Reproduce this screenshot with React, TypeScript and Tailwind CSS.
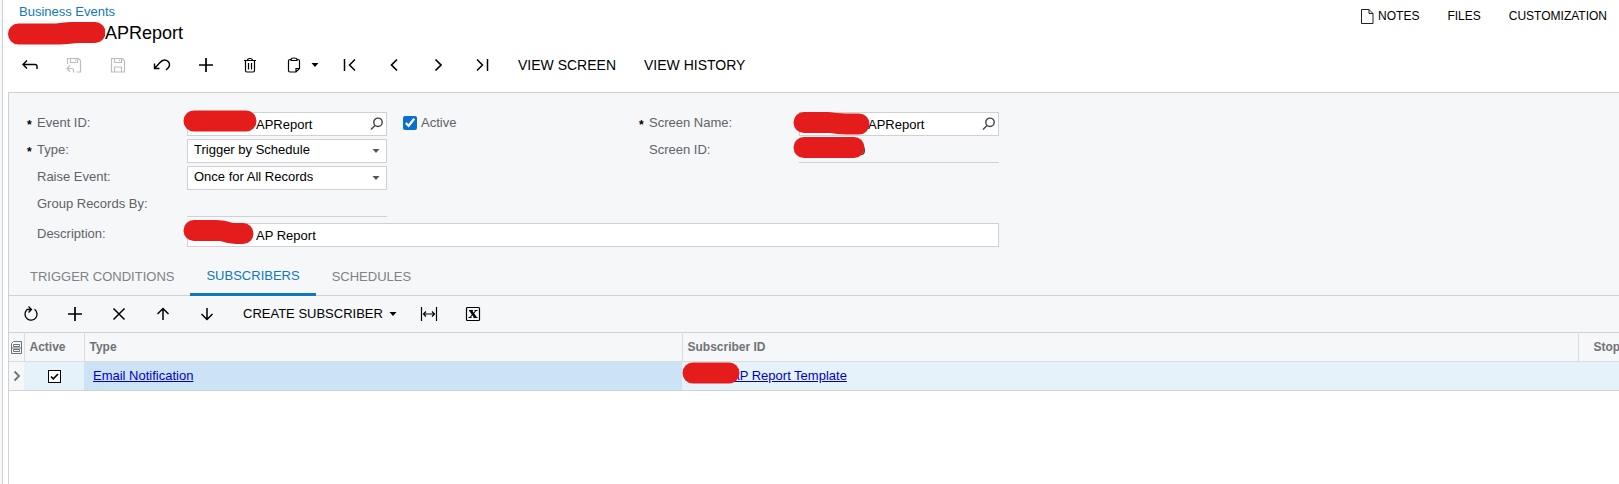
import type { ReactNode } from 'react';

const RED = '#e51c1c';

function Icon({ size = 18, width = 1.5, color = 'currentColor', children }: { size?: number; width?: number; color?: string; children: ReactNode }) {
  return (
    <svg width={size} height={size} viewBox="0 0 18 18" fill="none" stroke={color} strokeWidth={width} aria-hidden="true" className="shrink-0">
      {children}
    </svg>
  );
}

function Caret({ className = '' }: { className?: string }) {
  return (
    <svg width="8" height="4" viewBox="0 0 8 4" aria-hidden="true" className={`shrink-0 ${className}`}>
      <path d="M0.5 0h7L4 4z" fill="currentColor" />
    </svg>
  );
}

function Marker({ d, width, height, className = '' }: { d: string; width: number; height: number; className?: string }) {
  return (
    <svg width={width} height={height} viewBox={`0 0 ${width} ${height}`} aria-hidden="true" className={`pointer-events-none shrink-0 ${className}`}>
      <path d={d} fill={RED} />
    </svg>
  );
}

function ToolButton({ label, children, disabled, wide }: { label: string; children: ReactNode; disabled?: boolean; wide?: boolean }) {
  return (
    <button
      type="button"
      aria-label={label}
      disabled={disabled}
      className={`flex h-9 items-center justify-center ${wide ? 'w-14 gap-2 pl-1' : 'w-11'} ${disabled ? 'text-[#bdbdbd]' : 'text-black'}`}
    >
      {children}
    </button>
  );
}

const PlusIcon = () => (
  <Icon width={1.7}>
    <path d="M9 2v14M2 9h14" />
  </Icon>
);

function Label({ htmlFor, required, children }: { htmlFor: string; required?: boolean; children: ReactNode }) {
  return (
    <div className="flex h-6 w-[178px] shrink-0 pl-[18px]">
      <span className="w-2.5 pt-0.5 text-xs leading-[22px] font-bold text-black">{required ? '*' : ''}</span>
      <label htmlFor={htmlFor} className="text-[13px] leading-[22px] text-[#5e6368]">
        {children}
      </label>
    </div>
  );
}

function Lookup({ id, value, marker }: { id: string; value: string; marker: ReactNode }) {
  return (
    <div className="relative h-6 w-[200px]">
      <input id={id} defaultValue={value} className="block h-6 w-full border border-[#cfd1d3] bg-white pt-px pr-6 pl-[68px] text-[13px] text-black outline-none" />
      {marker}
      <button type="button" aria-label="Search" className="absolute top-1 right-0.5 flex size-4 items-center justify-center text-[#444]">
        <svg width="14" height="14" viewBox="0 0 14 14" fill="none" stroke="currentColor" strokeWidth="1.400" aria-hidden="true">
          <circle cx="8" cy="5.300" r="4.200" />
          <path d="M5 8.400L1 12.600" />
        </svg>
      </button>
    </div>
  );
}

function Select({ id, value }: { id: string; value: string }) {
  return (
    <div className="relative h-6 w-[200px]">
      <select id={id} className="block h-6 w-full appearance-none border border-[#cfd1d3] bg-white pr-6 pb-0.5 pl-1.5 text-[13px] text-black outline-none">
        <option>{value}</option>
      </select>
      <Caret className="pointer-events-none absolute top-2.5 right-[7px] text-[#555]" />
    </div>
  );
}

function Tab({ active, children }: { active?: boolean; children: ReactNode }) {
  return (
    <button
      type="button"
      role="tab"
      aria-selected={!!active}
      className={`h-10 px-4 pt-0.5 text-[13px] ${active ? 'border-b-3 border-[#1178bd] text-[#1178bd]' : 'text-[#808284]'}`}
    >
      {children}
    </button>
  );
}

export default function App() {
  return (
    <div className="flex min-h-screen overflow-hidden bg-white font-['Liberation_Sans',Arial,sans-serif] text-black">
      <div className="w-[3px] shrink-0 border-r border-[#d0d1d3] bg-[#f8f9fa]" />
      <div className="flex min-w-0 flex-1 flex-col pl-[5px]">
        <header className="flex justify-between">
          <div className="pt-px">
            <a href="#events" className="block h-5 pl-[11px] text-[13px] leading-[22px] text-[#1178bd]">
              Business Events
            </a>
            <h1 className="flex h-6 items-center text-lg leading-6">
              <Marker width={97} height={24} d="M10.500 2.500H48C56 1 62 1 68 1H87A10.500 10.500 0 0 1 87 22H72C66 22 58 23.500 52 23.500H10.500A10.500 10.500 0 0 1 10.500 2.500Z" />
              APReport
            </h1>
          </div>
          <nav className="flex h-8 items-center gap-7 pr-3 text-xs">
            <a href="#notes" className="flex items-center gap-1">
              <svg width="14" height="15" viewBox="0 0 14 15" fill="none" stroke="#222" aria-hidden="true">
                <path d="M1.500 0.500H9L13 4.500V14.500H1.500ZM9 0.500V4.500H13" />
              </svg>
              NOTES
            </a>
            <a href="#files">FILES</a>
            <a href="#customization">CUSTOMIZATION</a>
          </nav>
        </header>

        <div className="flex h-[47px] items-center pb-[7px] text-sm" role="toolbar" aria-label="Record actions">
          <ToolButton label="Back">
            <Icon width={1.4}>
              <path d="M6 4.500L2 8.500L6 12.500M2 8.500H14Q16 8.500 16 10.500V13" />
            </Icon>
          </ToolButton>
          <ToolButton label="Save and close" disabled>
            <Icon width={1.2}>
              <path d="M2.500 8V2.500h11l2 2v11.500H11.500M5.500 2.500v4h7v-4M10.500 3.500v1.500M5 9.500L2 12.500l3 3M2 12.500h4.500Q8.500 12.500 8.500 14v2.500" />
            </Icon>
          </ToolButton>
          <ToolButton label="Save" disabled>
            <Icon width={1.2}>
              <path d="M2.500 2.500h11l2 2v11.500h-13zM5.500 2.500v4h7v-4M10.500 3.500v1.500M5.500 16v-5h7v5" />
            </Icon>
          </ToolButton>
          <ToolButton label="Undo">
            <Icon width={1.4}>
              <path d="M1.500 7.500v5H6.500M1.500 12.500L6.500 7C8.500 4.500 11 3.300 13.500 4.300C16.800 5.800 17.300 9 15.500 11.500L13 14" />
            </Icon>
          </ToolButton>
          <ToolButton label="Add">
            <PlusIcon />
          </ToolButton>
          <ToolButton label="Delete">
            <Icon width={1.2}>
              <path d="M3 4.500h12M6.500 4.500q0-2 2.500-2t2.500 2M4.500 4.500V14.500q0 1.500 1.500 1.500h6q1.500 0 1.500-1.500V4.500M7.500 7v6.500M10.500 7v6.500" />
            </Icon>
          </ToolButton>
          <ToolButton label="Clipboard" wide>
            <Icon width={1.2}>
              <path d="M6 3.500H5q-1.500 0-1.500 1.500V14.500q0 1.500 1.500 1.500h6L14.500 12.500V5q0-1.500-1.500-1.500h-1M6 4.500V3.500q0-1.500 3-1.500t3 1.500v1zM14.500 12.500H11V16" />
            </Icon>
            <Caret />
          </ToolButton>
          <ToolButton label="First">
            <Icon width={1.5}>
              <path d="M3.500 3v12M14 3.500L8.500 9l5.500 5.500" />
            </Icon>
          </ToolButton>
          <ToolButton label="Previous">
            <Icon width={1.7}>
              <path d="M12 3.500L6.500 9l5.500 5.500" />
            </Icon>
          </ToolButton>
          <ToolButton label="Next">
            <Icon width={1.7}>
              <path d="M6.500 3.500L12 9l-5.500 5.500" />
            </Icon>
          </ToolButton>
          <ToolButton label="Last">
            <Icon width={1.5}>
              <path d="M14.500 3v12M4 3.500L9.500 9L4 14.500" />
            </Icon>
          </ToolButton>
          <button type="button" className="px-3.5">VIEW SCREEN</button>
          <button type="button" className="px-3.5">VIEW HISTORY</button>
        </div>

        <main className="flex-1 border-t border-l border-[#cfd1d3]">
          <div className="bg-[#f5f7f9]">
            <form className="flex flex-col gap-1.5 pt-[19px]">
              <div className="flex">
                <div className="flex w-[612px] shrink-0 flex-col gap-[3px]">
                  <div className="flex">
                    <Label htmlFor="event" required>Event ID:</Label>
                    <Lookup
                      id="event"
                      value="APReport"
                      marker={<Marker width={74} height={22} className="absolute -top-0.5 -left-1" d="M11 0.500H63A10.500 10.500 0 0 1 63 21.500H11A10.500 10.500 0 0 1 11 0.500Z" />}
                    />
                    <label className="flex h-6 items-center gap-1 pb-0.5 pl-4 text-[13px] text-[#5e6368]">
                      <input type="checkbox" defaultChecked className="size-3.5 accent-[#0871d0]" />
                      Active
                    </label>
                  </div>
                  <div className="flex">
                    <Label htmlFor="type" required>Type:</Label>
                    <Select id="type" value="Trigger by Schedule" />
                  </div>
                  <div className="flex">
                    <Label htmlFor="raise">Raise Event:</Label>
                    <Select id="raise" value="Once for All Records" />
                  </div>
                  <div className="flex">
                    <Label htmlFor="group">Group Records By:</Label>
                    <input id="group" readOnly className="h-6 w-[200px] border-b border-[#cfd1d3] outline-none" />
                  </div>
                </div>
                <div className="flex flex-col gap-[3px]">
                  <div className="flex">
                    <Label htmlFor="screen" required>Screen Name:</Label>
                    <Lookup
                      id="screen"
                      value="APReport"
                      marker={<Marker width={77} height={24} className="absolute -top-px -left-1.5" d="M11 1H35Q44 2 53 2.500H66A10.500 10.500 0 0 1 66 23.500H53Q44 23 37 22H11A10.500 10.500 0 0 1 11 1Z" />}
                    />
                  </div>
                  <div className="flex">
                    <Label htmlFor="screen-id">Screen ID:</Label>
                    <div className="relative h-6">
                      <input id="screen-id" readOnly value="0" className="block h-6 w-[200px] border-b border-[#cfd1d3] pl-[59px] text-[13px] text-black outline-none" />
                      <Marker width={72} height={21} className="absolute -top-0.5 -left-1.5" d="M11 0H61A10.500 10.500 0 0 1 61 21H11A10.500 10.500 0 0 1 11 0Z" />
                    </div>
                  </div>
                </div>
              </div>
              <div className="flex">
                <Label htmlFor="description">Description:</Label>
                <div className="relative h-6 w-[812px]">
                  <input id="description" defaultValue="AP Report" className="block h-6 w-full border border-[#cfd1d3] bg-white pt-px pl-[68px] text-[13px] text-black outline-none" />
                  <Marker width={71} height={25} className="absolute -top-1 -left-1" d="M11 1H33Q42 1 50 4H60A10.500 10.500 0 0 1 60 25H53Q44 24.500 37 22H11A10.500 10.500 0 0 1 11 1Z" />
                </div>
              </div>
            </form>

            <div role="tablist" className="mt-[9px] flex h-10 items-end border-b border-[#cfd1d3] pl-[5px]">
              <div className="-mb-px flex">
                <Tab>TRIGGER CONDITIONS</Tab>
                <Tab active>SUBSCRIBERS</Tab>
                <Tab>SCHEDULES</Tab>
              </div>
            </div>

            <div className="flex h-9 items-center text-[13px]" role="toolbar" aria-label="Subscriber actions">
              <ToolButton label="Refresh">
                <Icon width={1.3}>
                  <path d="M4.500 5.200A6 6 0 1 0 12.500 4.300M4.300 4.500h5M6.500 1.500L9.500 4.500L6.500 7.500" />
                </Icon>
              </ToolButton>
              <ToolButton label="Add row">
                <PlusIcon />
              </ToolButton>
              <ToolButton label="Delete row">
                <Icon>
                  <path d="M3.500 3.500l11 11M14.500 3.500l-11 11" />
                </Icon>
              </ToolButton>
              <ToolButton label="Move up">
                <Icon>
                  <path d="M9 15V3.500M3.500 9L9 3.500L14.500 9" />
                </Icon>
              </ToolButton>
              <ToolButton label="Move down">
                <Icon>
                  <path d="M9 3v11.500M3.500 9L9 14.500L14.500 9" />
                </Icon>
              </ToolButton>
              <button type="button" className="flex items-center gap-1.5 pr-2.5 pl-3.5">
                CREATE SUBSCRIBER
                <Caret />
              </button>
              <ToolButton label="Fit columns">
                <Icon width={1.2}>
                  <path d="M1.500 2v14M16.500 2v14M4 9h10M6 6.500L3.500 9L6 11.500M12 6.500L14.500 9L12 11.500" />
                </Icon>
              </ToolButton>
              <ToolButton label="Export to Excel">
                <Icon width={1.2}>
                  <rect x="2.500" y="2.500" width="13" height="13" rx="1" />
                  <path d="M6.500 5.500L11.500 12.500" strokeWidth="2.600" />
                  <path d="M12 5.500L6 12.500M5 5.500h4M10.500 5.500h3M4.500 12.500h3M9.500 12.500h4" strokeWidth="1.100" />
                </Icon>
              </ToolButton>
            </div>
          </div>

          <table className="w-full table-fixed border-collapse text-left">
            <colgroup>
              <col className="w-[15px]" />
              <col className="w-[60px]" />
              <col className="w-[598px]" />
              <col />
              <col className="w-[41px]" />
            </colgroup>
            <thead>
              <tr className="h-[29px] border-t border-b border-t-[#cfd1d3] border-b-[#d9dde0] bg-[#f5f7f9] text-xs whitespace-nowrap text-[#6f7376]">
                <th className="border-r border-[#d9dde0] p-0" aria-label="Row details">
                  <svg width="11" height="13" viewBox="0 0 11 13" fill="none" stroke="#6f7376" aria-hidden="true" className="mx-auto">
                    <path d="M0.500 12.500V2.500L2.500 0.500H10.500V12.500ZM2.500 3.500H8.500V5.500H2.500ZM2.500 8.500H8.500V10.500H2.500Z" />
                    <path d="M0.500 7H10.500" />
                  </svg>
                </th>
                <th className="border-r border-[#d9dde0] p-0 pl-[5px]">Active</th>
                <th className="border-r border-[#d9dde0] p-0 pl-[5px]">Type</th>
                <th className="border-r border-[#d9dde0] p-0 pl-[5px]">Subscriber ID</th>
                <th className="overflow-hidden p-0 pl-[15px]">Stop</th>
              </tr>
            </thead>
            <tbody>
              <tr className="h-[29px] border-b border-[#cfd1d3] bg-[#e5f2fa] text-[13px]">
                <td className="bg-[#f5f7f9] p-0">
                  <svg width="8" height="12" viewBox="0 0 8 12" fill="none" stroke="#6f7376" strokeWidth="1.800" aria-hidden="true" className="mx-auto">
                    <path d="M1.500 1.500L6 6l-4.500 4.500" />
                  </svg>
                </td>
                <td className="p-0">
                  <label className="relative mx-auto flex size-[13px]">
                    <input type="checkbox" defaultChecked aria-label="Active" className="size-[13px] appearance-none border border-black bg-white" />
                    <svg width="13" height="13" viewBox="0 0 13 13" fill="none" stroke="#000" strokeWidth="1.600" aria-hidden="true" className="pointer-events-none absolute inset-0">
                      <path d="M3 6.500L5.300 8.800L10 4" />
                    </svg>
                  </label>
                </td>
                <td className="bg-[#cbe3f5] p-0 pl-[9px]">
                  <a href="#email" className="text-[#0000c8] underline">Email Notification</a>
                </td>
                <td className="p-0">
                  <div className="relative pl-[49px]">
                    <a href="#template" className="text-[#0000c8] underline">AP Report Template</a>
                    <Marker width={58} height={22} className="absolute -top-1 left-0" d="M11 0.500H47A10.500 10.500 0 0 1 47 21.500H11A10.500 10.500 0 0 1 11 0.500Z" />
                  </div>
                </td>
                <td className="p-0" />
              </tr>
            </tbody>
          </table>
        </main>
      </div>
    </div>
  );
}
